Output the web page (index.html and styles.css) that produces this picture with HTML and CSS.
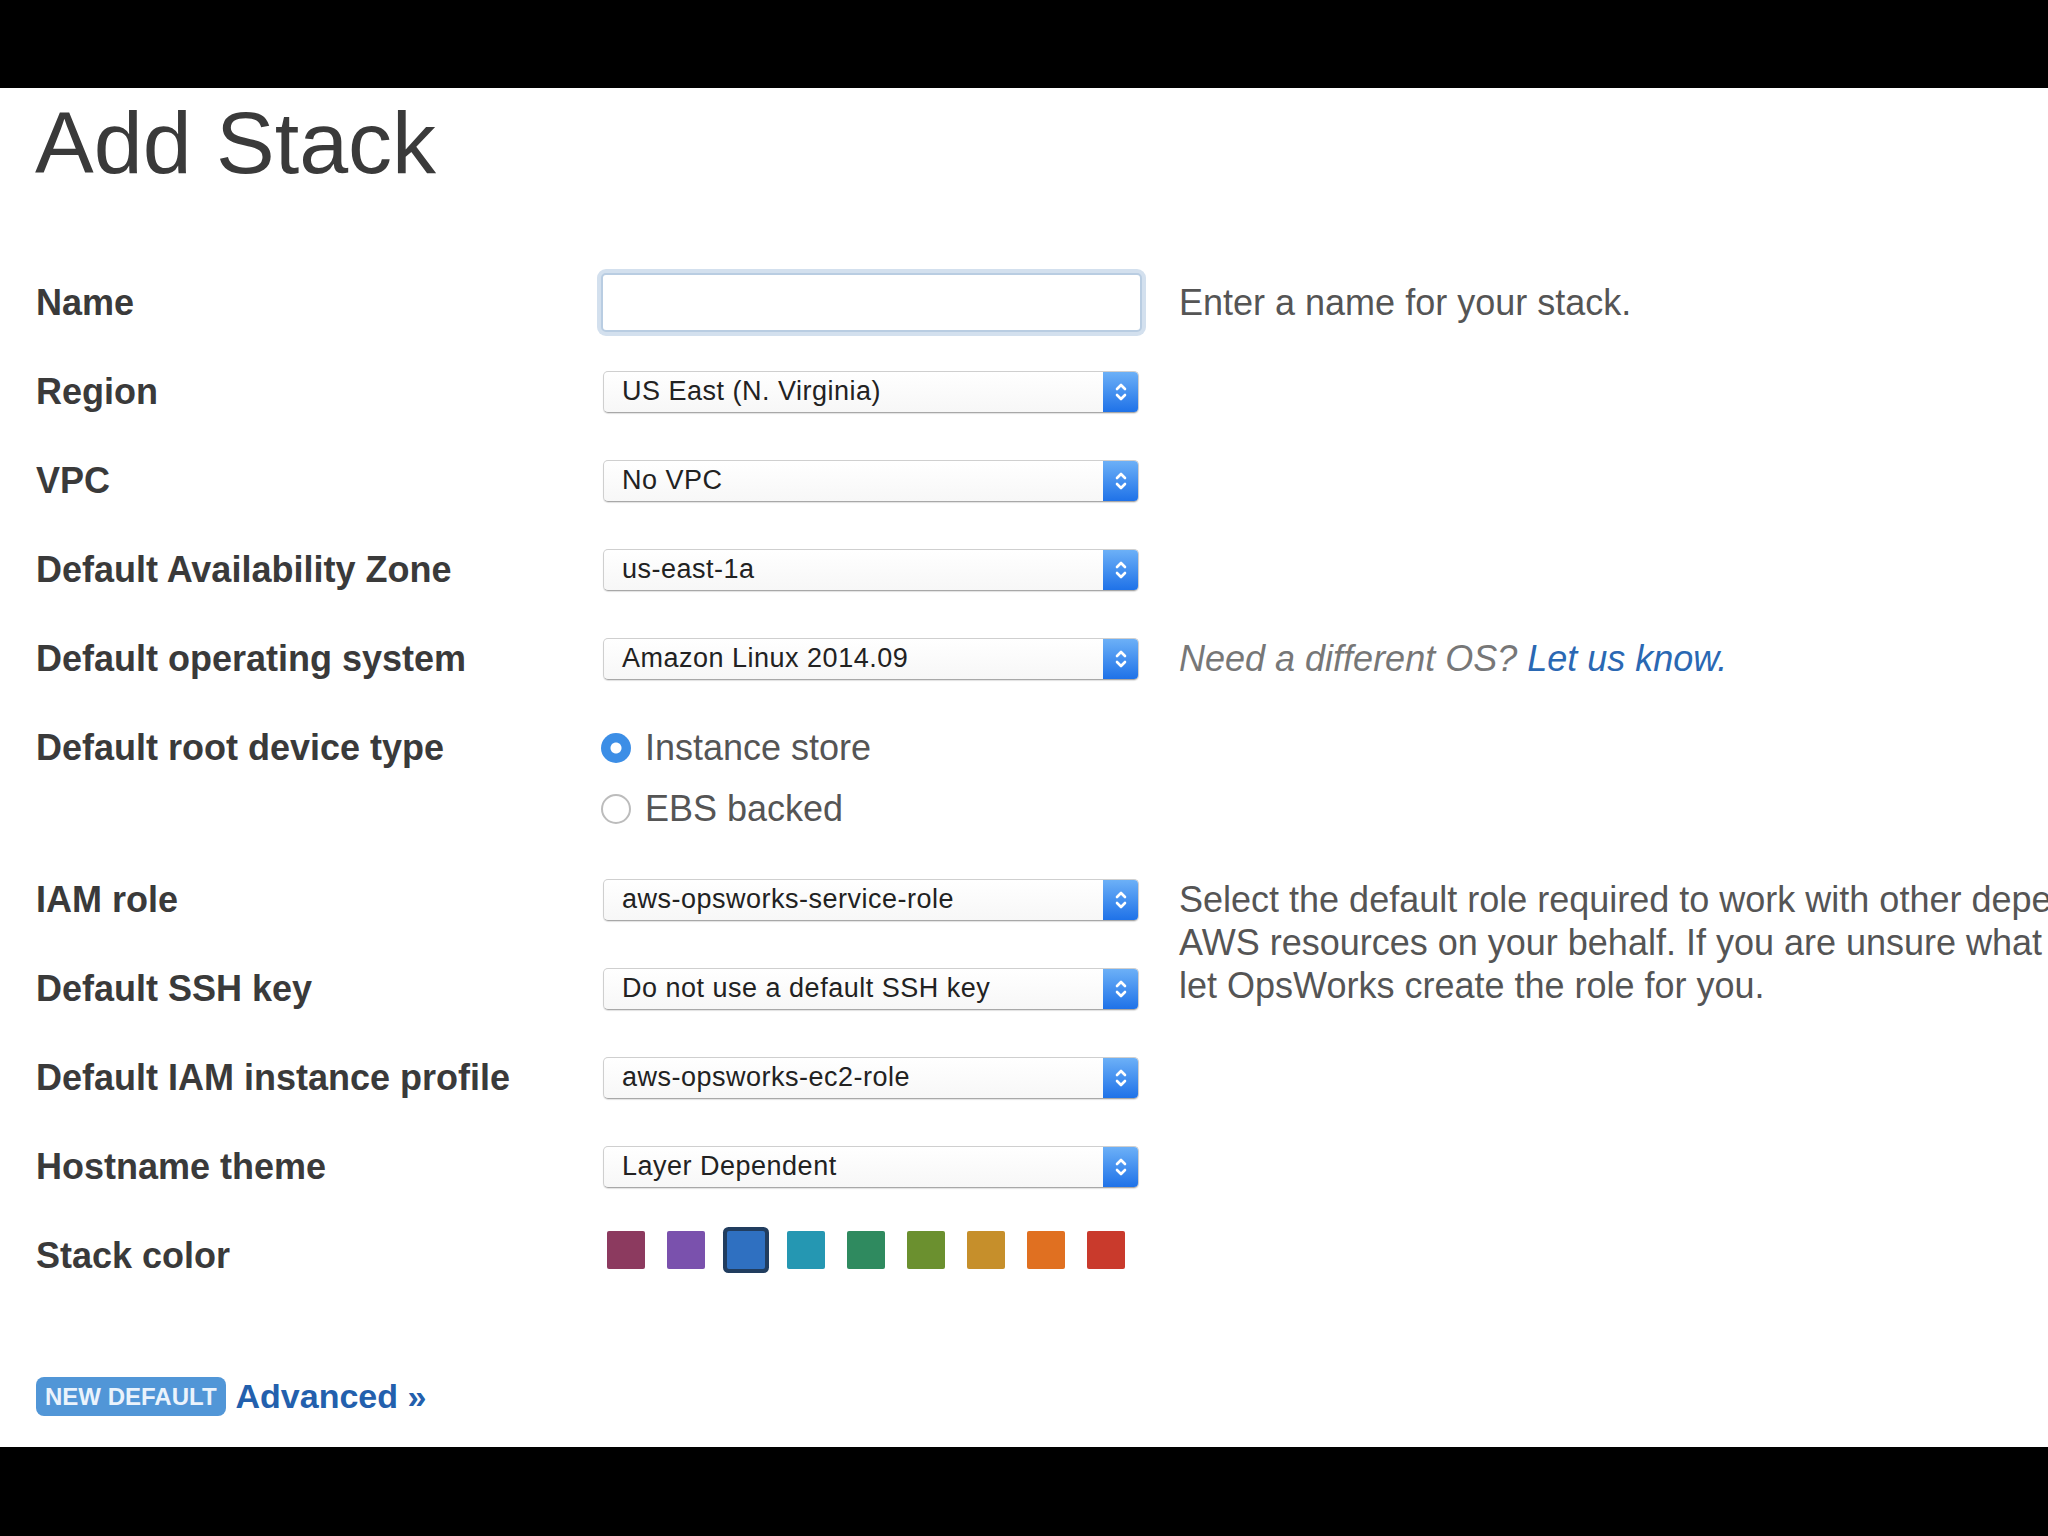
FILE: index.html
```html
<!DOCTYPE html>
<html lang="en">

<head>
    <meta charset="UTF-8" />
    <title>Add Stack</title>
    <link rel="stylesheet" href="styles.css">
</head>

<body>
    <div class="bar"></div>

    <main class="page">
        <h1>Add Stack</h1>

        <div class="form">
            <div class="row">
                <div class="label">Name</div>
                <div class="control"><input class="name-input" type="text"></div>
                <div class="help">Enter a name for your stack.</div>
            </div>

            <div class="row">
                <div class="label">Region</div>
                <div class="control">
                    <div class="select"><span class="value">US East (N. Virginia)</span><span class="arrows"><svg width="14" height="24" viewBox="0 0 14 24"><polyline points="3,9 7,5 11,9" /><polyline points="3,15 7,19 11,15" /></svg></span></div>
                </div>
            </div>

            <div class="row">
                <div class="label">VPC</div>
                <div class="control">
                    <div class="select"><span class="value">No VPC</span><span class="arrows"><svg width="14" height="24" viewBox="0 0 14 24"><polyline points="3,9 7,5 11,9" /><polyline points="3,15 7,19 11,15" /></svg></span></div>
                </div>
            </div>

            <div class="row">
                <div class="label">Default Availability Zone</div>
                <div class="control">
                    <div class="select"><span class="value">us-east-1a</span><span class="arrows"><svg width="14" height="24" viewBox="0 0 14 24"><polyline points="3,9 7,5 11,9" /><polyline points="3,15 7,19 11,15" /></svg></span></div>
                </div>
            </div>

            <div class="row">
                <div class="label">Default operating system</div>
                <div class="control">
                    <div class="select"><span class="value">Amazon Linux 2014.09</span><span class="arrows"><svg width="14" height="24" viewBox="0 0 14 24"><polyline points="3,9 7,5 11,9" /><polyline points="3,15 7,19 11,15" /></svg></span></div>
                </div>
                <div class="help note">Need a different OS? <a href="#">Let us know.</a></div>
            </div>

            <!-- Root device: two radios -->
            <div class="row tall">
                <div class="label">Default root device type</div>
                <div class="control radio-list">
                    <label class="radio"><span class="dot checked"></span>Instance store</label>
                    <label class="radio"><span class="dot"></span>EBS backed</label>
                </div>
            </div>

            <div class="row">
                <div class="label">IAM role</div>
                <div class="control">
                    <div class="select"><span class="value">aws-opsworks-service-role</span><span class="arrows"><svg width="14" height="24" viewBox="0 0 14 24"><polyline points="3,9 7,5 11,9" /><polyline points="3,15 7,19 11,15" /></svg></span></div>
                </div>
                <div class="help multi">Select the default role required to work with other dependent<br>AWS resources on your behalf. If you are unsure what to select,<br>let OpsWorks create the role for you.</div>
            </div>

            <div class="row">
                <div class="label">Default SSH key</div>
                <div class="control">
                    <div class="select"><span class="value">Do not use a default SSH key</span><span class="arrows"><svg width="14" height="24" viewBox="0 0 14 24"><polyline points="3,9 7,5 11,9" /><polyline points="3,15 7,19 11,15" /></svg></span></div>
                </div>
            </div>

            <div class="row">
                <div class="label">Default IAM instance profile</div>
                <div class="control">
                    <div class="select"><span class="value">aws-opsworks-ec2-role</span><span class="arrows"><svg width="14" height="24" viewBox="0 0 14 24"><polyline points="3,9 7,5 11,9" /><polyline points="3,15 7,19 11,15" /></svg></span></div>
                </div>
            </div>

            <div class="row">
                <div class="label">Hostname theme</div>
                <div class="control">
                    <div class="select"><span class="value">Layer Dependent</span><span class="arrows"><svg width="14" height="24" viewBox="0 0 14 24"><polyline points="3,9 7,5 11,9" /><polyline points="3,15 7,19 11,15" /></svg></span></div>
                </div>
            </div>

            <div class="row">
                <div class="label">Stack color</div>
                <div class="control swatches">
                    <span class="swatch plum"></span>
                    <span class="swatch purple"></span>
                    <span class="swatch blue selected"></span>
                    <span class="swatch teal"></span>
                    <span class="swatch green"></span>
                    <span class="swatch olive"></span>
                    <span class="swatch mustard"></span>
                    <span class="swatch orange"></span>
                    <span class="swatch red"></span>
                </div>
            </div>
        </div>

        <div class="advanced">
            <span class="badge">NEW DEFAULT</span>
            <a href="#">Advanced &raquo;</a>
        </div>
    </main>

    <div class="bar"></div>
</body>

</html>
```

FILE: styles.css
```css
body {
    margin: 0;
    background-color: #000;
    font-family: "Liberation Sans", Arial, sans-serif;
    overflow: hidden;
}

.bar {
    height: 88px;
    background-color: #000;
}

.page {
    background-color: #fff;
    height: 1359px;
    padding-left: 36px;
    box-sizing: border-box;
    overflow: hidden;
}

h1 {
    margin: 0 0 0 -1px;
    padding-top: 5px;
    font-size: 88px;
    font-weight: normal;
    line-height: 100px;
    color: #3a3a3a;
}

.form {
    margin-top: 65px;
}

.row {
    display: grid;
    grid-template-columns: 561px 582px auto;
    grid-template-rows: 100%;
    height: 89px;
    align-items: center;
}

.label {
    font-size: 36px;
    font-weight: bold;
    color: #3a3a3a;
}

.help {
    font-size: 36px;
    color: #555;
    white-space: nowrap;
}

.help.note {
    font-style: italic;
    color: #777;
}

.help.note a {
    color: #2a68b3;
    text-decoration: none;
}

.help.multi {
    align-self: start;
    padding-top: 23px;
    line-height: 43px;
}

/* name input with focus glow */
.name-input {
    display: block;
    width: 541px;
    height: 59px;
    margin-left: 4px;
    box-sizing: border-box;
    border: 2px solid #b9cde2;
    border-radius: 5px;
    box-shadow: 0 0 0 4px #d3e0ee;
    background-color: #fff;
    outline: none;
}

/* mac style select */
.select {
    display: flex;
    align-items: center;
    width: 536px;
    height: 42px;
    margin-left: 6px;
    box-sizing: border-box;
    border: 1px solid #cfcfcf;
    border-bottom-color: #a8a8a8;
    border-radius: 5px;
    background: linear-gradient(#fff, #f7f7f7);
    box-shadow: 0 1px 1px rgba(0, 0, 0, 0.12);
    overflow: hidden;
}

.select .value {
    flex: 1;
    padding-left: 18px;
    font-size: 27px;
    letter-spacing: 0.5px;
    color: #222;
}

.select .arrows {
    width: 35px;
    height: 100%;
    display: flex;
    align-items: center;
    justify-content: center;
    background: linear-gradient(#6cb0f7, #1f72e8);
}

.select svg polyline {
    fill: none;
    stroke: #fff;
    stroke-width: 2.6;
    stroke-linecap: round;
    stroke-linejoin: round;
}

/* radios */
.row.tall {
    height: 152px;
    align-items: start;
}

.row.tall .label {
    padding-top: 14px;
    line-height: 61px;
}

.radio-list {
    padding-top: 14px;
}

.radio {
    display: flex;
    align-items: center;
    gap: 14px;
    height: 61px;
    margin-left: 4px;
    font-size: 36px;
    color: #555;
}

.dot {
    width: 30px;
    height: 30px;
    box-sizing: border-box;
    border: 2px solid #bcbcbc;
    border-radius: 50%;
    background-color: #fff;
}

.dot.checked {
    border: none;
    background: radial-gradient(circle, #fff 0 5px, #3c8ee6 6px);
}

/* stack colors */
.swatches {
    display: flex;
    gap: 22px;
    margin-left: 10px;
    margin-bottom: 12px;
}

.swatch {
    width: 38px;
    height: 38px;
    border-radius: 2px;
}

.swatch.selected {
    box-shadow: 0 0 0 4px #213d5f;
}

.plum { background-color: #8c3a5f; }
.purple { background-color: #7a51ad; }
.blue { background-color: #2f70c1; }
.teal { background-color: #2597b2; }
.green { background-color: #2f8a5f; }
.olive { background-color: #6b902f; }
.mustard { background-color: #c68f2b; }
.orange { background-color: #e07021; }
.red { background-color: #c93a2c; }

/* advanced link */
.advanced {
    display: flex;
    align-items: center;
    gap: 10px;
    margin-top: 77px;
}

.badge {
    height: 39px;
    line-height: 39px;
    padding: 0 9px;
    border-radius: 8px;
    background-color: #5196d7;
    color: #eaf3fc;
    font-size: 24px;
    font-weight: bold;
}

.advanced a {
    font-size: 34px;
    font-weight: bold;
    color: #2360ad;
    text-decoration: none;
}
```
